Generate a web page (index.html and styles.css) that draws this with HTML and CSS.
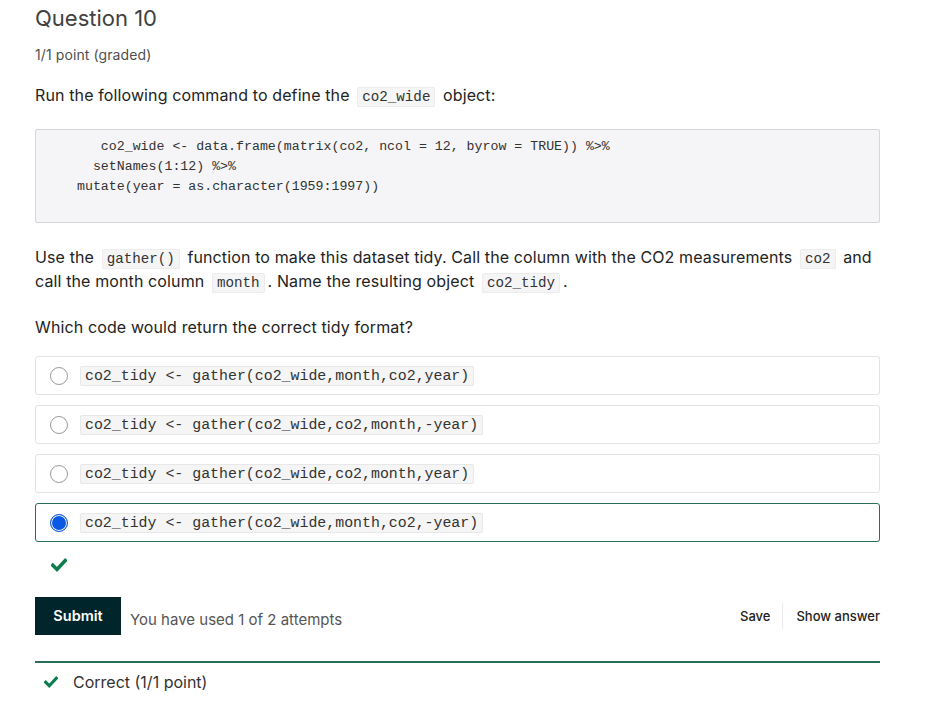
FILE: index.html
```html
<!DOCTYPE html>
<html lang="en">
<head>
<meta charset="utf-8">
<title>Question 10</title>
<link rel="stylesheet" href="styles.css">
</head>
<body>
<div class="problem">
  <h2 class="title">Question 10</h2>
  <div class="points">1/1 point (graded)</div>
  <p class="text">Run the following command to define the <code class="ic">co2_wide</code> object:</p>
  <pre class="block">   co2_wide &lt;- data.frame(matrix(co2, ncol = 12, byrow = TRUE)) %&gt;%
  setNames(1:12) %&gt;%
mutate(year = as.character(1959:1997))
</pre>
  <p class="text para">Use the <code class="ic">gather()</code> function to make this dataset tidy. Call the column with the CO2 measurements <code class="ic">co2</code> and call the month column <code class="ic">month</code>. Name the resulting object <code class="ic">co2_tidy</code>.</p>
  <p class="text which">Which code would return the correct tidy format?</p>
  <div class="options">
    <label class="opt"><span class="radio"></span><code class="oc">co2_tidy &lt;- gather(co2_wide,month,co2,year)</code></label>
    <label class="opt"><span class="radio"></span><code class="oc">co2_tidy &lt;- gather(co2_wide,co2,month,-year)</code></label>
    <label class="opt"><span class="radio"></span><code class="oc">co2_tidy &lt;- gather(co2_wide,co2,month,year)</code></label>
    <label class="opt opt-correct"><span class="radio radio-on"></span><code class="oc">co2_tidy &lt;- gather(co2_wide,month,co2,-year)</code></label>
  </div>
  <div class="status">
    <svg class="check" width="16" height="14" viewBox="0 0 16 14"><path d="M1.8 7.2 L6 11.4 L14.2 2.6" fill="none" stroke="#0d7d4d" stroke-width="3.6" stroke-linecap="square"/></svg>
  </div>
  <div class="actions">
    <div class="left">
      <button class="submit">Submit</button>
      <span class="attempts">You have used 1 of 2 attempts</span>
    </div>
    <div class="right">
      <button class="link">Save</button>
      <span class="sep"></span>
      <button class="link">Show answer</button>
    </div>
  </div>
  <div class="feedback">
    <svg class="check small" width="14" height="12" viewBox="0 0 16 14"><path d="M1.8 7.2 L6 11.4 L14.2 2.6" fill="none" stroke="#0d7d4d" stroke-width="3.6" stroke-linecap="square"/></svg>
    <span>Correct (1/1 point)</span>
  </div>
</div>
</body>
</html>
```
FILE: styles.css
```css
html, body {
  margin: 0;
  padding: 0;
  background: #fff;
}
body {
  font-family: Inter, "Noto Sans", sans-serif;
  color: #222;
}
.problem {
  width: 845px;
  margin-left: 35px;
  padding-top: 4px;
}
.title {
  margin: 0;
  font-size: 22px;
  line-height: 28px;
  font-weight: 400;
  color: #414141;
}
.points {
  margin-top: 13px;
  font-size: 14px;
  line-height: 20px;
  color: #4f4f4f;
  letter-spacing: 0.1px;
}
.text {
  margin: 0;
  font-size: 16px;
  line-height: 24px;
  color: #232323;
  letter-spacing: 0.12px;
}
.points + .text {
  margin-top: 18px;
}
.ic {
  font-family: "Liberation Mono", "Courier New", monospace;
  font-size: 14.2px;
  line-height: 14px;
  letter-spacing: 0;
  background: #f5f5f5;
  border: 1px solid #ececec;
  border-radius: 2px;
  padding: 1px 4px;
  margin: 0 3px;
  color: #333;
}
.block {
  margin: 22px 0 0;
  box-sizing: border-box;
  height: 94px;
  padding: 7px 0 0 41px;
  background: #f5f5f7;
  border: 1px solid #d6d6d6;
  border-radius: 2px;
  font-family: "Liberation Mono", "Courier New", monospace;
  font-size: 13.25px;
  line-height: 20px;
  color: #333;
  white-space: pre;
}
.para {
  margin-top: 22px;
}
.which {
  margin-top: 22px;
}
.options {
  margin-top: 17px;
  display: flex;
  flex-direction: column;
  gap: 10px;
}
.opt {
  box-sizing: border-box;
  height: 39px;
  display: flex;
  align-items: center;
  gap: 12px;
  padding-left: 14px;
  border: 1px solid #e2e2e2;
  border-radius: 3px;
}
.opt-correct {
  border-color: #2b6e58;
}
.radio {
  box-sizing: border-box;
  width: 18px;
  height: 18px;
  border-radius: 50%;
  border: 1px solid #9a9a9a;
  background: #fff;
  flex: none;
}
.radio-on {
  border: 1px solid #1b5fd6;
  background: #0b58e4;
  box-shadow: inset 0 0 0 1px #fff;
}
.oc {
  font-family: "Liberation Mono", "Courier New", monospace;
  font-size: 14.9px;
  line-height: 18px;
  background: #f5f5f5;
  border: 1px solid #e8e8e8;
  border-radius: 2px;
  padding: 0 4px;
  color: #333;
}
.status {
  height: 46px;
  display: flex;
  align-items: center;
  padding-left: 16px;
}
.actions {
  margin-top: 9px;
  display: flex;
  justify-content: space-between;
  align-items: center;
}
.left {
  display: flex;
  align-items: center;
  gap: 9px;
}
.submit {
  width: 86px;
  height: 38px;
  border: 0;
  border-radius: 0;
  background: #00262b;
  color: #fff;
  font-family: Inter, "Noto Sans", sans-serif;
  font-size: 14.5px;
  font-weight: 600;
  padding: 0 0 2px;
}
.attempts {
  font-size: 15px;
  color: #555;
  padding-top: 7px;
}
.right {
  display: flex;
  align-items: center;
}
.link {
  border: 0;
  background: none;
  font-family: Inter, "Noto Sans", sans-serif;
  font-size: 13px;
  font-weight: 500;
  color: #222;
  padding: 0;
}
.sep {
  width: 1px;
  height: 26px;
  background: #ececec;
  margin: 0 13px 0 12px;
}
.feedback {
  margin-top: 26px;
  border-top: 2px solid #2b6e58;
  display: flex;
  align-items: center;
  gap: 15px;
  padding: 7px 0 0 9px;
  font-size: 16px;
  line-height: 24px;
  color: #333;
}
```
